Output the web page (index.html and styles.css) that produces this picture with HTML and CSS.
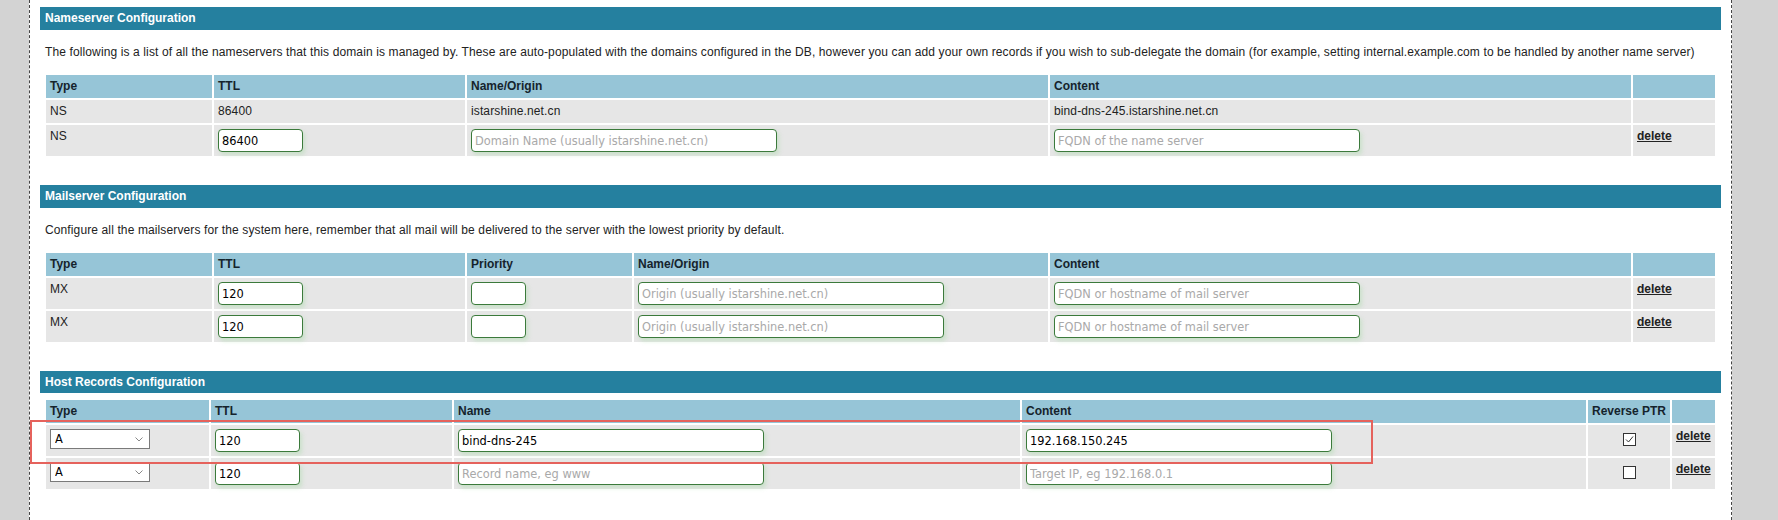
FILE: index.html
```html
<!DOCTYPE html>
<html lang="en">
<head>
  <meta charset="UTF-8">
  <title>Zone Records</title>
  <link rel="stylesheet" href="styles.css">
</head>
<body>
  <div class="page">

    <!-- Nameservers -->
    <div class="panel">
      <div class="panel-title">Nameserver Configuration</div>
      <p class="panel-desc">The following is a list of all the nameservers that this domain is managed by. These are auto-populated with the domains configured in the DB, however you can add your own records if you wish to sub-delegate the domain (for example, setting internal.example.com to be handled by another name server)</p>
      <table class="records">
        <colgroup>
          <col class="c-type"><col class="c-ttl"><col class="c-name"><col class="c-content"><col>
        </colgroup>
        <tr>
          <th>Type</th><th>TTL</th><th>Name/Origin</th><th>Content</th><th></th>
        </tr>
        <tr>
          <td>NS</td><td>86400</td><td>istarshine.net.cn</td><td>bind-dns-245.istarshine.net.cn</td><td></td>
        </tr>
        <tr>
          <td>NS</td>
          <td><input class="field f-ttl" type="text" value="86400"></td>
          <td><input class="field f-wide" type="text" placeholder="Domain Name (usually istarshine.net.cn)"></td>
          <td><input class="field f-wide" type="text" placeholder="FQDN of the name server"></td>
          <td><a class="del" href="#">delete</a></td>
        </tr>
      </table>
    </div>

    <!-- Mailservers -->
    <div class="panel">
      <div class="panel-title">Mailserver Configuration</div>
      <p class="panel-desc">Configure all the mailservers for the system here, remember that all mail will be delivered to the server with the lowest priority by default.</p>
      <table class="records">
        <colgroup>
          <col class="c-type"><col class="c-ttl"><col class="c-prio"><col class="c-origin"><col class="c-content"><col>
        </colgroup>
        <tr>
          <th>Type</th><th>TTL</th><th>Priority</th><th>Name/Origin</th><th>Content</th><th></th>
        </tr>
        <tr>
          <td>MX</td>
          <td><input class="field f-ttl" type="text" value="120"></td>
          <td><input class="field f-prio" type="text"></td>
          <td><input class="field f-wide" type="text" placeholder="Origin (usually istarshine.net.cn)"></td>
          <td><input class="field f-wide" type="text" placeholder="FQDN or hostname of mail server"></td>
          <td><a class="del" href="#">delete</a></td>
        </tr>
        <tr>
          <td>MX</td>
          <td><input class="field f-ttl" type="text" value="120"></td>
          <td><input class="field f-prio" type="text"></td>
          <td><input class="field f-wide" type="text" placeholder="Origin (usually istarshine.net.cn)"></td>
          <td><input class="field f-wide" type="text" placeholder="FQDN or hostname of mail server"></td>
          <td><a class="del" href="#">delete</a></td>
        </tr>
      </table>
    </div>

    <!-- Host records -->
    <div class="panel">
      <div class="panel-title tight">Host Records Configuration</div>
      <table class="records">
        <colgroup>
          <col class="h-type"><col class="h-ttl"><col class="h-name"><col class="h-content"><col class="h-ptr"><col>
        </colgroup>
        <tr>
          <th>Type</th><th>TTL</th><th>Name</th><th>Content</th><th>Reverse PTR</th><th></th>
        </tr>
        <tr>
          <td><select class="type-select"><option>A</option><option>AAAA</option><option>CNAME</option><option>TXT</option></select></td>
          <td><input class="field f-ttl" type="text" value="120"></td>
          <td><input class="field f-wide" type="text" value="bind-dns-245"></td>
          <td><input class="field f-wide" type="text" value="192.168.150.245"></td>
          <td class="center"><input class="ptr" type="checkbox" checked></td>
          <td><a class="del" href="#">delete</a></td>
        </tr>
        <tr>
          <td><select class="type-select"><option>A</option><option>AAAA</option><option>CNAME</option><option>TXT</option></select></td>
          <td><input class="field f-ttl" type="text" value="120"></td>
          <td><input class="field f-wide" type="text" placeholder="Record name, eg www"></td>
          <td><input class="field f-wide" type="text" placeholder="Target IP, eg 192.168.0.1"></td>
          <td class="center"><input class="ptr" type="checkbox"></td>
          <td><a class="del" href="#">delete</a></td>
        </tr>
      </table>
    </div>

  </div>

  <!-- highlight drawn over the first host record -->
  <div class="highlight"></div>
</body>
</html>
```

FILE: styles.css
```css
/* Global */
* {
  margin: 0;
  padding: 0;
  box-sizing: border-box;
}

body {
  font-family: 'Liberation Sans', Arial, sans-serif;
  font-size: 12px;
  color: #222;
  background-color: #d3d3d3;
}

/* White content column */
.page {
  margin-left: 29px;
  width: 1703px;
  min-height: 100vh;
  padding: 7px 10px 0;
  background: #ffffff;
  border-left: 1px dashed #444;
  border-right: 1px dashed #444;
}

/* Panels */
.panel {
  margin-bottom: 27px;
}

.panel-title {
  height: 23px;
  line-height: 23px;
  padding-left: 5px;
  background: #25809f;
  color: #ffffff;
  font-weight: bold;
}

.panel-title.tight {
  height: 22px;
  line-height: 22px;
  margin-bottom: 5px;
}

.panel-desc {
  margin: 14px 0 13px;
  padding-left: 5px;
  line-height: 16px;
  letter-spacing: 0.12px;
  white-space: nowrap;
}

/* Record tables */
.records {
  width: calc(100% - 8px);
  margin: 0 4px;
  table-layout: fixed;
  border-collapse: separate;
  border-spacing: 2px;
}

.records th,
.records td {
  padding: 4px;
  line-height: 15px;
  text-align: left;
  vertical-align: top;
  white-space: nowrap;
}

.records th {
  background: #96c5d7;
  color: #15232c;
  font-weight: bold;
}

.records td {
  background: #e6e6e6;
  letter-spacing: 0.12px;
}

.records td.center {
  text-align: center;
}

.c-type { width: 166px; }
.c-ttl { width: 251px; }
.c-name { width: 581px; }
.c-content { width: 581px; }
.c-prio { width: 165px; }
.c-origin { width: 414px; }

.h-type { width: 163px; }
.h-ttl { width: 241px; }
.h-name { width: 566px; }
.h-content { width: 564px; }
.h-ptr { width: 82px; }

/* Inputs */
.field {
  display: inline-block;
  vertical-align: top;
  height: 23px;
  padding: 0 3px;
  border: 1px solid #3b7a3b;
  border-radius: 4px;
  background: #ffffff;
  box-shadow: 2px 3px 4px rgba(150, 215, 150, 0.35);
  font-family: 'DejaVu Sans', Verdana, sans-serif;
  font-size: 11.4px;
  letter-spacing: 0;
  color: #000;
  outline: none;
}

.field::placeholder {
  color: #a9a9a9;
}

.f-ttl { width: 85px; }
.f-prio { width: 55px; }
.f-wide { width: 306px; }

.type-select {
  display: inline-block;
  vertical-align: top;
  width: 100px;
  height: 20px;
  padding: 0 4px;
  border: 1px solid #7a7a7a;
  background: #ffffff url("data:image/svg+xml,%3Csvg xmlns='http://www.w3.org/2000/svg' width='8' height='5' viewBox='0 0 8 5'%3E%3Cpath d='M0.5 0.5l3.5 3.5 3.5-3.5' fill='none' stroke='%23888' stroke-width='1'/%3E%3C/svg%3E") no-repeat right 6px center;
  font-family: 'DejaVu Sans', Verdana, sans-serif;
  font-size: 11.4px;
  letter-spacing: 0;
  color: #000;
  appearance: none;
  -webkit-appearance: none;
}

.ptr {
  display: block;
  width: 13px;
  height: 13px;
  margin: 4px auto 0;
  border: 1px solid #333;
  background: #ffffff;
  appearance: none;
  -webkit-appearance: none;
}

.ptr:checked {
  background: #ffffff url("data:image/svg+xml,%3Csvg xmlns='http://www.w3.org/2000/svg' width='11' height='11' viewBox='0 0 11 11'%3E%3Cpath d='M2 5.5l2.5 2.5 4.5-5.5' fill='none' stroke='%23333' stroke-width='1'/%3E%3C/svg%3E") no-repeat center;
}

.del {
  color: #222;
  font-weight: bold;
  letter-spacing: 0;
  text-decoration: underline;
}

/* Red annotation box */
.highlight {
  position: absolute;
  left: 30px;
  top: 420px;
  width: 1343px;
  height: 44px;
  border: 2px solid #e5625c;
  pointer-events: none;
}
```
